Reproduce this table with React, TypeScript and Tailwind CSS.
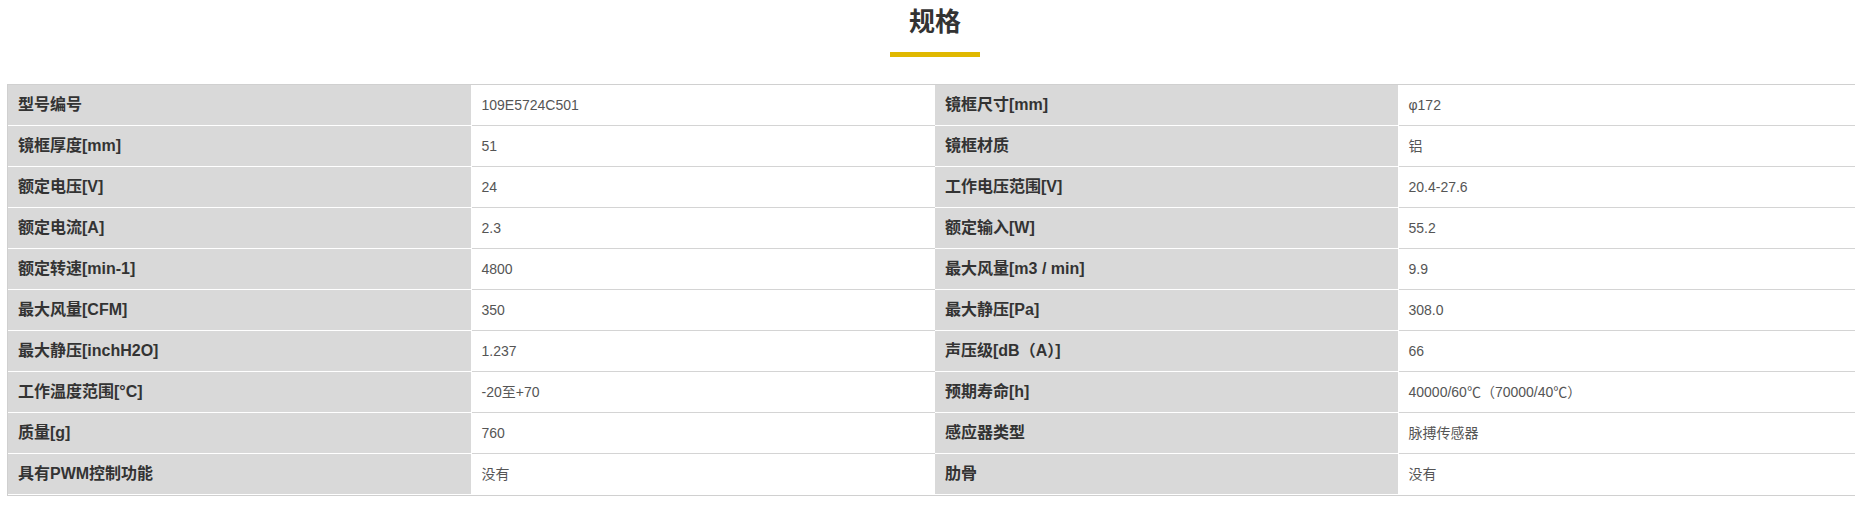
const specs: [string, string, string, string][] = [
  ['型号编号', '109E5724C501', '镜框尺寸[mm]', 'φ172'],
  ['镜框厚度[mm]', '51', '镜框材质', '铝'],
  ['额定电压[V]', '24', '工作电压范围[V]', '20.4-27.6'],
  ['额定电流[A]', '2.3', '额定输入[W]', '55.2'],
  ['额定转速[min-1]', '4800', '最大风量[m3 / min]', '9.9'],
  ['最大风量[CFM]', '350', '最大静压[Pa]', '308.0'],
  ['最大静压[inchH2O]', '1.237', '声压级[dB（A）]', '66'],
  ['工作温度范围[°C]', '-20至+70', '预期寿命[h]', '40000/60℃（70000/40℃）'],
  ['质量[g]', '760', '感应器类型', '脉搏传感器'],
  ['具有PWM控制功能', '没有', '肋骨', '没有'],
];

const font = "font-['Liberation_Sans','Noto_Sans_CJK_SC',sans-serif]";

function Label({ text }: { text: string }) {
  return (
    <div className="h-[41px] flex items-center px-[10px] bg-[#d9d9d9] border-r border-b border-white text-[16px] font-bold text-[#333]">
      {text}
    </div>
  );
}

function Value({ text, last }: { text: string; last: boolean }) {
  return (
    <div
      className={`h-[41px] flex items-center px-[10px] bg-white text-[14px] text-[#555] ${
        last ? 'border-b border-white' : 'border-b border-[#d4d4d4]'
      }`}
    >
      {text}
    </div>
  );
}

export default function App() {
  return (
    <div className={`w-full overflow-hidden bg-white ${font}`}>
      <div className="w-[1870px] px-[7px] pt-[4px]">
        {/* Section heading */}
        <h2 className="text-center text-[26px] leading-[36px] font-bold text-[#333]">规格</h2>
        <div className="mx-auto mt-[12px] h-[5px] w-[90px] bg-[#e0b800]" />

        {/* Spec table */}
        <div className="mt-[27px] border border-[#d0d0d0] grid grid-cols-4">
          {specs.map((row, i) => {
            const last = i === specs.length - 1;
            return (
              <div key={i} className="contents">
                <Label text={row[0]} />
                <Value text={row[1]} last={last} />
                <Label text={row[2]} />
                <Value text={row[3]} last={last} />
              </div>
            );
          })}
        </div>
      </div>
    </div>
  );
}
